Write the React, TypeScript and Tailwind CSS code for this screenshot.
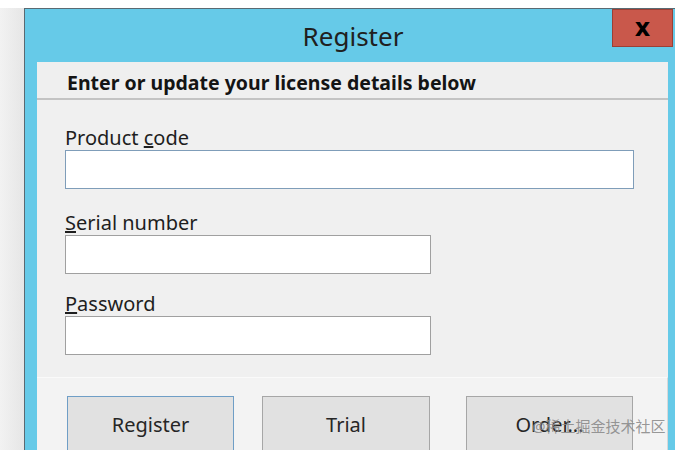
import React from 'react';

const font = { fontFamily: '"Noto Sans", "Open Sans", "Noto Sans CJK SC", sans-serif' };

function Field({ label, wide }: { label: React.ReactNode; wide?: boolean }) {
  return (
    <div className="flex flex-col">
      <label className="text-[20px] leading-[23px] text-[#1e1e1e]">{label}</label>
      <div
        className={`mt-[1px] h-[39px] bg-white border ${
          wide ? 'w-[569px] border-[#7f9db9]' : 'w-[366px] border-[#a0a0a0]'
        }`}
      />
    </div>
  );
}

function WinButton({ children, primary }: { children: React.ReactNode; primary?: boolean }) {
  return (
    <div
      className={`h-[60px] flex justify-center pt-[14px] bg-[#e1e1e1] border text-[20px] leading-[28px] text-[#262626] ${
        primary ? 'border-[#6f9ec6]' : 'border-[#a6a6a6]'
      }`}
    >
      {children}
    </div>
  );
}

export default function App() {
  return (
    <div className="w-[675px] h-[450px] overflow-hidden bg-[#f4f4f4] relative" style={font}>
      {/* top band */}
      <div className="h-[8px] bg-white" />
      <div className="flex h-[442px]">
        {/* desktop strip */}
        <div className="w-[24px] bg-gradient-to-r from-[#f2f2f2] to-[#e6e6e6]" />
        {/* window */}
        <div className="flex-1 flex flex-col bg-[#66cae8] border-l border-t border-[#5a6a72]">
          {/* title bar */}
          <div className="relative h-[53px] flex justify-center">
            <span className="text-[26px] leading-[54px] text-[#202020] pl-[6px]">Register</span>
            <div className="absolute top-0 right-[2px] w-[61px] h-[38px] bg-[#c9584b] border border-[#9c3f35] flex items-center justify-center">
              <span className="text-[24px] font-black leading-none text-black" style={{ fontFamily: '"DejaVu Sans", sans-serif' }}>x</span>
            </div>
          </div>
          {/* client area */}
          <div className="flex-1 ml-[12px] mr-[7px] flex flex-col bg-[#f0f0f0]">
            <div className="h-[38px] border-b-2 border-[#c3c3c3] bg-[#efefef] pl-[30px] pt-[6px] flex items-center">
              <span className="text-[19.5px] font-bold text-[#141414]">Enter or update your license details below</span>
            </div>
            <div className="h-[277px] pl-[28px] pt-[26px] flex flex-col">
              <Field wide label={<>Product <u>c</u>ode</>} />
              <div className="mt-[22px]">
                <Field label={<><u>S</u>erial number</>} />
              </div>
              <div className="mt-[18px]">
                <Field label={<><u>P</u>assword</>} />
              </div>
            </div>
            <div className="flex-1 bg-[#f3f3f3] border-t border-[#fafafa] border-r border-r-[#d8d8d8] pl-[30px] pt-[18px] flex">
              <div className="w-[167px]">
                <WinButton primary>Register</WinButton>
              </div>
              <div className="w-[168px] ml-[28px]">
                <WinButton>Trial</WinButton>
              </div>
              <div className="w-[167px] ml-[36px]">
                <WinButton>Order...</WinButton>
              </div>
            </div>
          </div>
        </div>
      </div>
      {/* watermark */}
      <span className="absolute left-[532px] top-[417px] text-[15px] leading-[18px] text-[#8a8a8a]/90">
        @稀土掘金技术社区
      </span>
    </div>
  );
}
